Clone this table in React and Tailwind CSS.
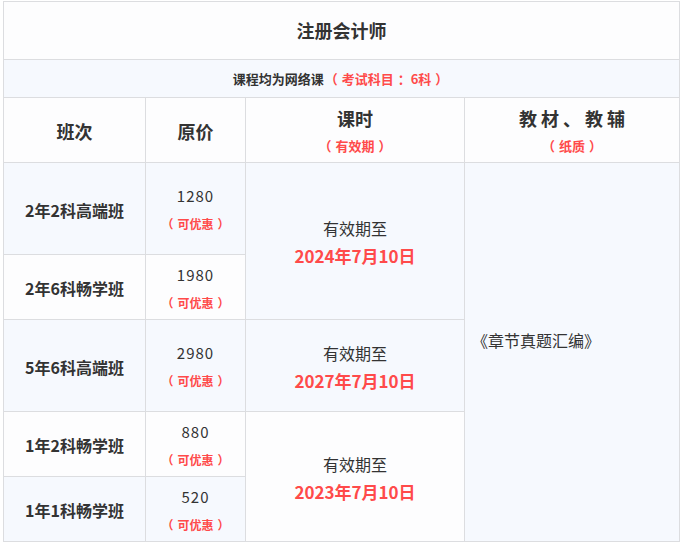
const font = { fontFamily: '"Noto Sans CJK SC", "Noto Sans", sans-serif' };

const rows = [
  { name: "2年2科高端班", price: "1280", bg: "bg-[#f6f9fe]" },
  { name: "2年6科畅学班", price: "1980", bg: "bg-[#fdfdfe]" },
  { name: "5年6科高端班", price: "2980", bg: "bg-[#f6f9fe]" },
  { name: "1年2科畅学班", price: "880", bg: "bg-[#fdfdfe]" },
  { name: "1年1科畅学班", price: "520", bg: "bg-[#f6f9fe]" },
];

const rowStart = ["row-start-4", "row-start-5", "row-start-6", "row-start-7", "row-start-8"];

function Paren({ children, outer = "ml-[4px]" }) {
  return (
    <>
      <span className={`${outer} mr-[4px]`}>（</span>
      {children}
      <span className="ml-[4px] mr-[4px]">）</span>
    </>
  );
}

function Expiry({ date, className }) {
  return (
    <div className={`col-start-3 flex flex-col items-center justify-center pt-[2px] ${className}`}>
      <div className="text-[16px] leading-[27px] text-[#333]">有效期至</div>
      <div className="text-[17px] leading-[27px] font-bold text-[#ff4a4a]">{date}</div>
    </div>
  );
}

export default function App() {
  return (
    <div className="w-[684px] h-[545px] bg-white pt-px pl-[3px]" style={font}>
      <div className="grid w-[677px] grid-cols-[141px_99px_218px_214px] grid-rows-[57px_37px_64px_91px_64px_91px_64px_64px] gap-px bg-[#dcdde0] p-px">
        {/* title */}
        <div className="col-span-4 flex items-center justify-center bg-[#fdfdfe] text-[18px] font-bold text-[#333]">
          注册会计师
        </div>
        <div className="col-span-4 flex items-center justify-center bg-[#f6f9fe] pl-[2px] text-[13px] font-bold text-[#333]">
          课程均为网络课
          <span className="text-[#ff4a4a]">
            <Paren outer="ml-[1px]">
              考试科目<span className="ml-[4px]">：</span>6科
            </Paren>
          </span>
        </div>

        {/* header */}
        <div className="flex items-center justify-center bg-[#fdfdfe] pt-[2px] text-[18px] font-bold text-[#333]">班次</div>
        <div className="flex items-center justify-center bg-[#fdfdfe] pt-[2px] text-[18px] font-bold text-[#333]">原价</div>
        <div className="flex flex-col items-center justify-center bg-[#fdfdfe] pt-[3px]">
          <div className="text-[18px] leading-[27px] font-bold text-[#333]">课时</div>
          <div className="text-[13px] leading-[27px] font-bold text-[#ff4a4a]">
            <Paren>有效期</Paren>
          </div>
        </div>
        <div className="flex flex-col items-center justify-center bg-[#fdfdfe] pt-[3px]">
          <div className="text-[18px] leading-[27px] font-bold text-[#333] tracking-[4px] mr-[-4px]">教材、教辅</div>
          <div className="text-[13px] leading-[27px] font-bold text-[#ff4a4a]">
            <Paren>纸质</Paren>
          </div>
        </div>

        {/* body */}
        {rows.map((r, i) => (
          <div key={r.name} className="contents">
            <div className={`col-start-1 ${rowStart[i]} ${r.bg} flex items-center justify-center pt-[2px] text-[16px] font-bold text-[#333]`}>
              {r.name}
            </div>
            <div className={`col-start-2 ${rowStart[i]} ${r.bg} flex flex-col items-center justify-center pt-[3px]`}>
              <div className="text-[15px] leading-[28px] tracking-[1px] text-[#333]">{r.price}</div>
              <div className="text-[12px] leading-[28px] font-bold text-[#ff4a4a]">
                <Paren>可优惠</Paren>
              </div>
            </div>
          </div>
        ))}

        <Expiry date="2024年7月10日" className="row-start-4 row-span-2 bg-[#f6f9fe]" />
        <Expiry date="2027年7月10日" className="row-start-6 bg-[#f6f9fe]" />
        <Expiry date="2023年7月10日" className="row-start-7 row-span-2 bg-[#fdfdfe]" />

        <div className="col-start-4 row-start-4 row-span-5 flex items-center bg-[#f6f9fe] pl-[7px] pb-[24px] text-[16px] text-[#333]">
          《章节真题汇编》
        </div>
      </div>
    </div>
  );
}
